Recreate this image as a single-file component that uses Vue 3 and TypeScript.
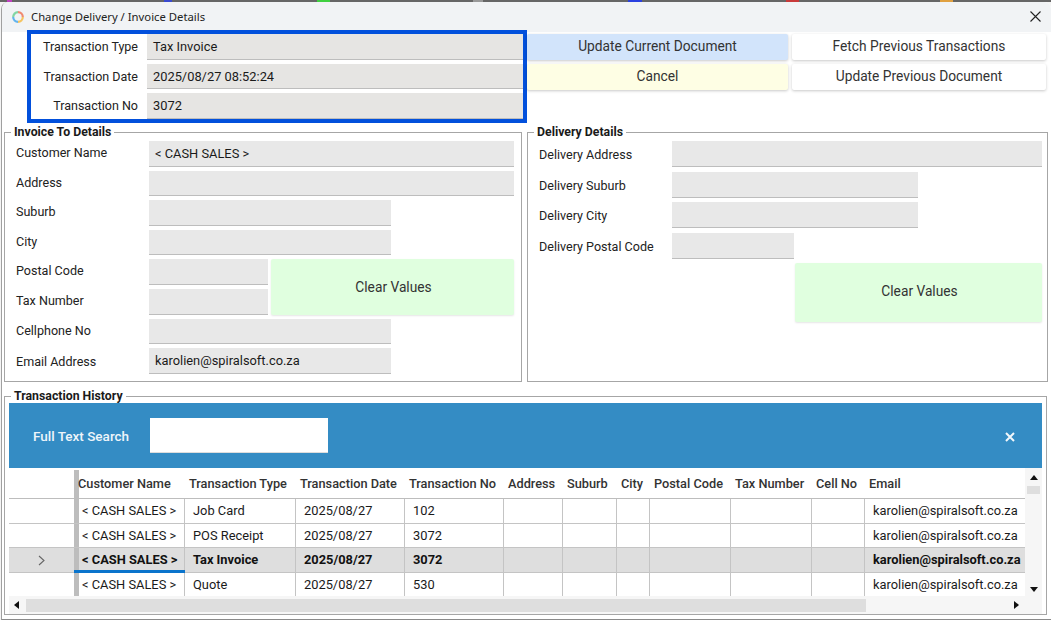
<script setup lang="ts">
const invoiceRows = [
  { label: 'Customer Name', value: '< CASH SALES >', size: 'wide' },
  { label: 'Address', value: '', size: 'wide' },
  { label: 'Suburb', value: '', size: 'mid' },
  { label: 'City', value: '', size: 'mid' },
]
const deliveryRows = [
  { label: 'Delivery Address', size: 'wide' },
  { label: 'Delivery Suburb', size: 'mid' },
  { label: 'Delivery City', size: 'mid' },
  { label: 'Delivery Postal Code', size: 'small' },
]
const headers = ['Customer Name', 'Transaction Type', 'Transaction Date', 'Transaction No', 'Address', 'Suburb', 'City', 'Postal Code', 'Tax Number', 'Cell No', 'Email']
const rows = [
  { type: 'Job Card', no: '102', selected: false },
  { type: 'POS Receipt', no: '3072', selected: false },
  { type: 'Tax Invoice', no: '3072', selected: true },
  { type: 'Quote', no: '530', selected: false },
]
</script>

<template>
  <div class="desk">
    <div class="strip"></div>
    <div class="window">
      <header class="titlebar">
        <svg class="logo" width="12" height="12" viewBox="0 0 12 12">
          <path d="M6 1.2A4.8 4.8 0 0 1 10.8 6" fill="none" stroke="#f08a70" stroke-width="2.2" />
          <path d="M10.8 6A4.8 4.8 0 0 1 6 10.8" fill="none" stroke="#f5c460" stroke-width="2.2" />
          <path d="M6 10.8A4.8 4.8 0 0 1 1.2 6" fill="none" stroke="#62b4ee" stroke-width="2.2" />
          <path d="M1.2 6A4.8 4.8 0 0 1 6 1.2" fill="none" stroke="#82d6a4" stroke-width="2.2" />
        </svg>
        <span class="title">Change Delivery / Invoice Details</span>
        <svg class="close" width="11" height="11" viewBox="0 0 11 11">
          <path d="M.5.5l10 10M10.5.5l-10 10" stroke="#222" stroke-width="1.1" fill="none" />
        </svg>
      </header>

      <section class="top">
        <div class="txbox">
          <div class="txrow"><label>Transaction Type</label><div class="field">Tax Invoice</div></div>
          <div class="txrow"><label>Transaction Date</label><div class="field">2025/08/27 08:52:24</div></div>
          <div class="txrow"><label>Transaction No</label><div class="field">3072</div></div>
        </div>
        <div class="actions">
          <button class="btn blue">Update Current Document</button>
          <button class="btn">Fetch Previous Transactions</button>
          <button class="btn yellow">Cancel</button>
          <button class="btn">Update Previous Document</button>
        </div>
      </section>

      <section class="details">
        <fieldset class="group invoice">
          <legend>Invoice To Details</legend>
          <div class="form">
            <div v-for="r in invoiceRows" :key="r.label" class="frow">
              <label>{{ r.label }}</label>
              <div class="field" :class="r.size">{{ r.value }}</div>
            </div>
            <div class="split">
              <div class="splitcol">
                <div class="frow"><label>Postal Code</label><div class="field small"></div></div>
                <div class="frow"><label>Tax Number</label><div class="field small"></div></div>
              </div>
              <button class="btn green">Clear Values</button>
            </div>
            <div class="frow"><label>Cellphone No</label><div class="field mid"></div></div>
            <div class="frow"><label class="low">Email Address</label><div class="field mid">karolien@spiralsoft.co.za</div></div>
          </div>
        </fieldset>
        <fieldset class="group delivery">
          <legend>Delivery Details</legend>
          <div class="dform">
            <div v-for="r in deliveryRows" :key="r.label" class="drow">
              <label>{{ r.label }}</label>
              <div class="field" :class="r.size"></div>
            </div>
            <div class="dclear"><button class="btn green">Clear Values</button></div>
          </div>
        </fieldset>
      </section>

      <fieldset class="group history">
        <legend>Transaction History</legend>
        <div class="searchbar">
          <span class="searchlabel">Full Text Search</span>
          <div class="searchinput"></div>
          <svg class="searchx" width="10" height="10" viewBox="0 0 10 10">
            <path d="M1 1l8 8M9 1l-8 8" stroke="#f2f7fb" stroke-width="2" fill="none" />
          </svg>
        </div>
        <div class="gridwrap">
          <div class="grid">
            <div class="grow ghead">
              <div class="gutter"></div>
              <div class="frozen"></div>
              <div v-for="(h, i) in headers" :key="h" class="gh" :class="{ firsth: i === 0 }">{{ h }}</div>
            </div>
            <div v-for="(r, i) in rows" :key="i" class="grow gbody" :class="{ sel: r.selected }">
              <div class="gutter">
                <svg v-if="r.selected" width="7" height="11" viewBox="0 0 7 11">
                  <path d="M1 1l5 4.5-5 4.5" stroke="#666" stroke-width="1.1" fill="none" />
                </svg>
              </div>
              <div class="frozen"></div>
              <div class="gc first">&lt; CASH SALES &gt;</div>
              <div class="gc">{{ r.type }}</div>
              <div class="gc">2025/08/27</div>
              <div class="gc">{{ r.no }}</div>
              <div class="gc"></div>
              <div class="gc"></div>
              <div class="gc"></div>
              <div class="gc"></div>
              <div class="gc"></div>
              <div class="gc"></div>
              <div class="gc last">karolien@spiralsoft.co.za</div>
            </div>
          </div>
          <div class="vscroll">
            <span class="arrow up"></span>
            <span class="vthumb"></span>
            <span class="arrow down"></span>
          </div>
        </div>
        <div class="hscroll">
          <span class="arrow left"></span>
          <span class="hthumb"></span>
          <span class="arrow right"></span>
        </div>
      </fieldset>
    </div>
  </div>
</template>

<style>
html, body { margin: 0; background: #fff; overflow: hidden; }
</style>

<style scoped>
.desk {
  width: 1051px;
  height: 620px;
  box-sizing: border-box;
  background: #f4f4f4;
  font-family: Roboto, "Liberation Sans", sans-serif;
  font-size: 12.85px;
  color: #1a1a1a;
  overflow: hidden;
}
.strip {
  height: 2px;
  background: linear-gradient(90deg,
    #666 0 7px, #c040c0 7px 12px,
    #666 12px 164px, #3a4ad0 164px 172px,
    #666 172px 317px, #40d040 317px 330px,
    #666 330px 473px, #999 473px 483px,
    #666 483px 628px, #2a40e0 628px 642px,
    #666 642px 786px, #c83a3a 786px 799px,
    #666 799px 940px, #e0a040 940px 953px,
    #666 953px);
}
.window {
  box-sizing: border-box;
  margin-left: 1px;
  width: 1050px;
  height: 618px;
  background: #fff;
  border-radius: 7px 7px 0 0;
  overflow: hidden;
  border-left: 1px solid #a0a0a0;
  border-bottom: 1px solid #8a8a8a;
}
.titlebar {
  height: 30px;
  background: #f1f3f5;
  display: flex;
  align-items: center;
  padding: 0 10px 0 10px;
}
.logo { flex: none; margin-top: -1px; }
.title {
  margin: 0 0 2px 7px;
  font-family: "Noto Sans", "Open Sans", sans-serif;
  font-size: 11.3px;
  color: #222;
  flex: 1;
}
.close { flex: none; margin-top: -2px; }

.top {
  display: flex;
  padding-left: 25px;
  height: 95px;
  align-items: flex-start;
  margin-top: -2px;
}
.txbox {
  box-sizing: border-box;
  width: 500px;
  height: 93px;
  border: 4px solid #0250dc;
  display: flex;
  flex-direction: column;
  gap: 4px;
}
.txrow { display: flex; height: 25.5px; }
.txrow label {
  width: 116px;
  padding-right: 9px;
  text-align: right;
  box-sizing: border-box;
  line-height: 25px;
  flex: none;
  font-size: 12.5px;
  color: #222;
}
.txrow .field { flex: 1; background: #e6e5e3; line-height: 25px; }
.field {
  box-sizing: border-box;
  background: #e8e8e8;
  border-bottom: 1px solid #bdbdbd;
  padding: 0 6px;
  line-height: 25px;
  color: #1a1a1a;
}
.actions {
  display: grid;
  grid-template-columns: 261px 254px;
  grid-auto-rows: 26px;
  column-gap: 4px;
  row-gap: 4px;
  padding-top: 4px;
}
.btn {
  border: 0;
  border-radius: 2px;
  background: #fff;
  font-family: inherit;
  font-size: 13.75px;
  color: #333;
  box-shadow: 0 1px 3px rgba(0, 0, 0, 0.22);
  padding: 0 0 2px;
}
.blue { background: #d2e4fb; }
.yellow { background: #fefee4; }
.green { background: #e0ffdf; box-shadow: 0 1px 2px rgba(0, 0, 0, 0.1); }

.details {
  display: flex;
  margin-left: 2px;
  height: 258px;
  gap: 5px;
}
.group {
  margin: 0;
  padding: 0;
  box-sizing: border-box;
  border: 1px solid #a6a6a6;
  min-width: 0;
}
.group legend {
  margin-left: 6px;
  padding: 0 3px;
  font-weight: 700;
  font-size: 12.3px;
  line-height: 14px;
  color: #1a1a1a;
}
.invoice { width: 518px; height: 257px; }
.delivery { width: 521px; height: 257px; }
.form {
  padding: 2px 7px 0 11px;
  display: flex;
  flex-direction: column;
  gap: 4px;
}
.frow { display: flex; height: 25.6px; }
.frow label { width: 133px; line-height: 24px; flex: none; font-size: 12.55px; color: #222; }
.frow label.low { line-height: 27px; }
.wide { flex: 1; }
.form .mid { width: 242px; }
.form .small { width: 119px; }
.split { display: flex; gap: 3px; }
.splitcol { display: flex; flex-direction: column; gap: 4px; }
.split .btn { flex: 1; padding: 0 0 0 2px; }
.dform {
  padding: 2px 5px 0 11px;
  display: flex;
  flex-direction: column;
  gap: 4.6px;
}
.drow { display: flex; height: 26px; }
.drow label { width: 133px; line-height: 27px; flex: none; font-size: 12.55px; color: #222; }
.dform .mid { width: 246px; }
.dform .small { width: 122px; }
.dclear { display: flex; justify-content: flex-end; }
.dclear .btn { width: 247px; height: 59px; padding: 0 0 4px 2px; }

.history {
  margin: 6px 0 0 2px;
  width: 1043px;
  height: 226px;
  padding: 0 4px;
}
.history legend { margin-left: 2px; }
.searchbar {
  height: 65px;
  background: #348cc4;
  display: flex;
  align-items: center;
  padding: 0 27px 0 24px;
  color: #fff;
}
.searchlabel { width: 117px; font-weight: 500; font-size: 13.5px; flex: none; color: #eef5fa; }
.searchinput { width: 178px; height: 35px; background: #fff; box-sizing: border-box; border-bottom: 1px solid #ddd; }
.searchx { margin-left: auto; margin-top: 2px; }
.gridwrap { display: flex; height: 128px; }
.grid { width: 1016px; overflow: hidden; flex: none; }
.grow {
  display: grid;
  grid-template-columns: 65px 5px 106px 111px 109px 99px 59px 54px 33px 81px 81px 53px 160px;
}
.ghead {
  height: 31px;
  font-weight: 500;
  font-size: 12.75px;
  color: #333;
  border-bottom: 1px solid #bdbdbd;
  box-sizing: border-box;
}
.gh { line-height: 31px; padding-left: 4px; white-space: nowrap; }
.gh.firsth { padding-left: 0; margin-left: -1px; }
.gbody { height: 25px; box-sizing: border-box; border-bottom: 1px solid #c4c4c4; }
.gbody:nth-child(odd) { height: 24px; }
.gutter { display: flex; align-items: center; justify-content: center; }
.frozen { background: #bdbdbd; }
.ghead .frozen { margin-top: 2px; }
.gc {
  border-right: 1px solid #c4c4c4;
  padding-left: 8px;
  line-height: 23px;
  white-space: nowrap;
  overflow: hidden;
}
.gc.first { padding-left: 3px; }
.gc.last { border-right: 0; }
.sel { background: #dedede; font-weight: 700; color: #111; position: relative; }
.sel::after {
  content: "";
  position: absolute;
  left: 65px;
  width: 111px;
  bottom: -1px;
  height: 3px;
  background: #0a74cc;
}
.vscroll {
  flex: 1;
  background: #f6f6f6;
  display: flex;
  flex-direction: column;
  align-items: center;
  padding: 7px 0 4px;
}
.vthumb { width: 13px; height: 8px; background: #dedede; margin-top: 6px; }
.vscroll .down { margin-top: auto; }
.hscroll {
  height: 18px;
  background: #f6f6f6;
  display: flex;
  align-items: center;
  padding: 0 7px 0 5px;
  box-sizing: border-box;
}
.hthumb { width: 840px; height: 13px; background: #dedede; margin-left: 7px; }
.hscroll .right { margin-left: auto; margin-right: 16px; }
.arrow { width: 0; height: 0; display: block; flex: none; }
.up { border: 4px solid transparent; border-top: 0; border-bottom: 5px solid #111; }
.down { border: 4px solid transparent; border-bottom: 0; border-top: 5px solid #111; }
.left { border: 4px solid transparent; border-left: 0; border-right: 5px solid #111; }
.right { border: 4px solid transparent; border-right: 0; border-left: 5px solid #111; }
</style>
